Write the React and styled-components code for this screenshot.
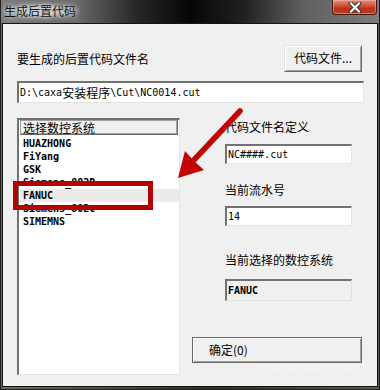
import React from "react";
import styled, { createGlobalStyle } from "styled-components";

const cjk = `"Noto Sans CJK SC", "Noto Sans", sans-serif`;
const mono = `"DejaVu Sans Mono", "Liberation Mono", "Noto Sans CJK SC", monospace`;

const Global = createGlobalStyle`
  html, body { margin: 0; padding: 0; background: #f0f0f0; }
  body { font-family: ${cjk}; }
`;

const Window = styled.div`
  width: 380px;
  height: 390px;
  box-sizing: border-box;
  display: flex;
  flex-direction: column;
  border: 1px solid #1e1e1a;
  border-top: none;
  background: linear-gradient(90deg, #6a6a66 0%, #4a4a46 30%, #2e2e2c 55%, #5a5a56 100%);
`;

const TitleBar = styled.div`
  height: 23px;
  flex: none;
  display: flex;
  justify-content: space-between;
  align-items: flex-start;
  background: linear-gradient(
    90deg,
    #7a7a7a 0%,
    #6a6a6a 20%,
    #262626 36%,
    #060606 50%,
    #202020 64%,
    #606060 80%,
    #7c7c7c 100%
  );
`;

const Title = styled.span`
  margin: 3px 0 0 2px;
  padding: 0 4px 0 1px;
  font-family: ${cjk};
  font-size: 12px;
  line-height: 16px;
  color: #111;
  background: radial-gradient(ellipse at center, rgba(190, 190, 190, 0.85) 30%, rgba(140, 140, 140, 0) 75%);
  text-shadow: 0 0 4px rgba(255, 255, 255, 0.9), 0 0 8px rgba(255, 255, 255, 0.6);
`;

const CloseButton = styled.div`
  width: 45px;
  height: 15px;
  margin-right: 2px;
  box-sizing: border-box;
  border: 1px solid #4a1a12;
  border-top: none;
  border-radius: 0 0 4px 4px;
  background: linear-gradient(180deg, #e0917c 0%, #d0553a 40%, #c0301a 60%, #b83a28 100%);
  box-shadow: inset 0 0 0 1px rgba(255, 200, 190, 0.45);
  display: flex;
  align-items: center;
  justify-content: center;
`;

const Client = styled.div`
  position: relative;
  flex: 1;
  margin: 0 1px 2px 1px;
  border: 1px solid #141414;
  background: #f0f0f0;
  padding: 21px 13px 11px 14px;
  display: flex;
  flex-direction: column;
  min-height: 0;
`;

const TopRow = styled.div`
  height: 27px;
  display: flex;
  justify-content: space-between;
  align-items: center;
  padding-right: 2px;
`;

const Label = styled.div`
  font-family: ${cjk};
  font-size: 12px;
  line-height: 16px;
  color: #000;
  white-space: nowrap;
  margin-top: ${(p) => p.$top || 0}px;
  margin-left: ${(p) => p.$indent || 0}px;
`;

const Button = styled.div`
  box-sizing: border-box;
  width: ${(p) => p.$w}px;
  height: ${(p) => p.$h}px;
  margin-top: ${(p) => p.$top || 0}px;
  background: #f0f0f0;
  border-top: 1px solid ${(p) => (p.$default ? "#6a6a6a" : "#e3e3e3")};
  border-left: 1px solid ${(p) => (p.$default ? "#6a6a6a" : "#e3e3e3")};
  border-right: 1px solid #696969;
  border-bottom: 1px solid #696969;
  box-shadow: inset 1px 1px #ffffff, inset -1px -1px #a0a0a0;
  font-family: ${cjk};
  font-size: 12px;
  line-height: 16px;
  color: #000;
  display: flex;
  align-items: center;
  justify-content: ${(p) => (p.$default ? "flex-start" : "center")};
  padding-left: ${(p) => (p.$default ? 16 : 0)}px;
  padding-bottom: 1px;
  white-space: nowrap;
`;

const Field = styled.div`
  box-sizing: border-box;
  width: ${(p) => (p.$w ? `${p.$w}px` : "100%")};
  height: ${(p) => p.$h}px;
  margin-top: ${(p) => p.$top || 0}px;
  margin-left: ${(p) => p.$indent || 0}px;
  background: ${(p) => (p.$disabled ? "#f0f0f0" : "#ffffff")};
  border-top: 2px solid #727272;
  border-left: 2px solid #727272;
  border-right: 1px solid #e3e3e3;
  border-bottom: 1px solid #e3e3e3;
  padding: 0 0 1px ${(p) => p.$pad || 0}px;
  display: flex;
  align-items: center;
  font-family: ${mono};
  font-size: 10px;
  font-weight: ${(p) => (p.$bold ? 700 : 400)};
  color: #000;
  white-space: nowrap;
  overflow: hidden;
`;

const Wide = styled.span`
  font-family: ${cjk};
  font-size: 12px;
`;

const Lower = styled.div`
  flex: 1;
  margin-top: 15px;
  display: flex;
  min-height: 0;
`;

const ListBox = styled.div`
  width: 163px;
  box-sizing: border-box;
  background: #fff;
  border-top: 2px solid #727272;
  border-left: 2px solid #727272;
  border-right: 1px solid #e3e3e3;
  border-bottom: 1px solid #e3e3e3;
  padding: 0 0 0 1px;
  display: flex;
  flex-direction: column;
`;

const ListHeader = styled.div`
  height: 15px;
  box-sizing: border-box;
  margin-right: 1px;
  border: 1px solid #a0a0a0;
  border-right-color: #696969;
  border-bottom-color: #696969;
  box-shadow: inset -1px -1px #a0a0a0;
  background: #f0f0f0;
  padding-left: 2px;
  font-family: ${cjk};
  font-size: 12px;
  line-height: 13px;
  color: #000;
  white-space: nowrap;
`;

const Items = styled.div`
  padding-top: 2px;
  display: flex;
  flex-direction: column;
`;

const Item = styled.div`
  height: 13px;
  line-height: 13px;
  padding-left: 3px;
  font-family: ${mono};
  font-size: 10px;
  font-weight: 700;
  color: #000;
  background: ${(p) => (p.$active ? "#ebebeb" : "transparent")};
  white-space: nowrap;
`;

const RightCol = styled.div`
  width: 170px;
  margin-left: 12px;
  display: flex;
  flex-direction: column;
`;

const Highlight = styled.div`
  position: absolute;
  left: 10px;
  top: 157px;
  width: 140px;
  height: 29px;
  box-sizing: border-box;
  border: 5px solid #b40202;
  pointer-events: none;
`;

const ArrowSvg = styled.svg`
  position: absolute;
  left: 157px;
  top: 76px;
  overflow: visible;
  pointer-events: none;
`;

const Watermark = styled.div`
  position: absolute;
  left: 259px;
  top: 338px;
  font-family: "DejaVu Serif", serif;
  font-size: 10px;
  line-height: 12px;
  color: rgba(255, 255, 255, 0.45);
  white-space: nowrap;
  pointer-events: none;
`;

const systems = ["HUAZHONG", "FiYang", "GSK", "Siemens_802D", "FANUC", "Siemens_802c", "SIMEMNS"];

export default function App() {
  return (
    <>
      <Global />
      <Window>
        <TitleBar>
          <Title>生成后置代码</Title>
          <CloseButton>
            <svg width="14" height="11" viewBox="0 0 14 11">
              <path d="M3 1.5 L11 9.5 M11 1.5 L3 9.5" stroke="#3a2a28" strokeWidth="4.2" strokeLinecap="square" />
              <path d="M3 1.5 L11 9.5 M11 1.5 L3 9.5" stroke="#ffffff" strokeWidth="2.2" strokeLinecap="square" />
            </svg>
          </CloseButton>
        </TitleBar>
        <Client>
          <TopRow>
            <Label>要生成的后置代码文件名</Label>
            <Button $w={78} $h={27}>代码文件...</Button>
          </TopRow>
          <Field $h={22} $top={9} $pad={1}>
            D:\caxa<Wide>安装程序</Wide>\Cut\NC0014.cut
          </Field>
          <Lower>
            <ListBox>
              <ListHeader>选择数控系统</ListHeader>
              <Items>
                {systems.map((s) => (
                  <Item key={s} $active={s === "FANUC"}>
                    {s}
                  </Item>
                ))}
              </Items>
            </ListBox>
            <RightCol>
              <Label $top={1} $indent={33}>代码文件名定义</Label>
              <Field $w={127} $h={20} $top={9} $indent={33} $pad={1}>NC####.cut</Field>
              <Label $top={18} $indent={33}>当前流水号</Label>
              <Field $w={127} $h={20} $top={8} $indent={33} $pad={1}>14</Field>
              <Label $top={26} $indent={33}>当前选择的数控系统</Label>
              <Field $w={127} $h={22} $top={11} $indent={33} $pad={1} $disabled $bold>FANUC</Field>
              <Button $w={170} $h={26} $top={36} $default>确定(0)</Button>
            </RightCol>
          </Lower>
          <Highlight />
          <ArrowSvg width="90" height="90" viewBox="0 0 90 90">
            <line x1="80" y1="11" x2="33" y2="61" stroke="#c20404" strokeWidth="5.5" strokeLinecap="round" />
            <path d="M18 78 L25 51 L34 61 L44 70 Z" fill="#c20404" />
          </ArrowSvg>
          <Watermark>jingyan.baidu.com</Watermark>
        </Client>
      </Window>
    </>
  );
}
